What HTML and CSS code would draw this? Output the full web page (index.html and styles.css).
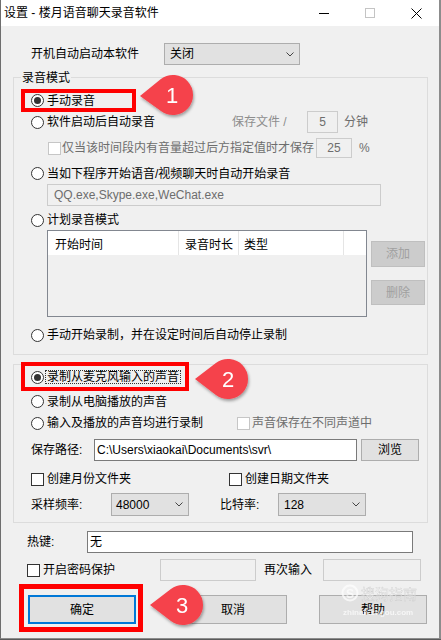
FILE: index.html
```html
<!DOCTYPE html>
<html lang="zh-CN">
<head>
    <meta charset="UTF-8">
    <title>设置 - 楼月语音聊天录音软件</title>
    <link rel="stylesheet" href="styles.css">
</head>
<body>
    <div class="window">
        <div class="titlebar">
            <span class="title">设置 - 楼月语音聊天录音软件</span>
            <span class="tb-btn">
                <svg width="10" height="10" viewBox="0 0 10 10"><path d="M0 5.5H10" stroke="#000" stroke-width="1"/></svg>
            </span>
            <span class="tb-btn">
                <svg width="10" height="10" viewBox="0 0 10 10"><rect x="0.5" y="0.5" width="9" height="9" fill="none" stroke="#c4c4c4"/></svg>
            </span>
            <span class="tb-btn">
                <svg width="11" height="11" viewBox="0 0 11 11"><path d="M0.5 0.5L10.5 10.5M10.5 0.5L0.5 10.5" stroke="#000" stroke-width="1"/></svg>
            </span>
        </div>

        <div class="content">
            <div class="row row-autostart">
                <span class="autostart-label">开机自动启动本软件</span>
                <div class="select sel-auto">
                    <span>关闭</span>
                    <svg class="chev" width="8" height="5" viewBox="0 0 8 5"><path d="M0.5 0.5L4 4L7.5 0.5" fill="none" stroke="#444"/></svg>
                </div>
            </div>

            <!-- 录音模式 -->
            <div class="group group-mode">
                <div class="legend">录音模式</div>

                <div class="row r-manual">
                    <span class="radio on"><i></i>手动录音</span>
                </div>
                <div class="row r-startup">
                    <span class="radio"><i></i>软件启动后自动录音</span>
                    <span class="save-lbl">保存文件 /</span>
                    <span class="field disabled f-min">5</span>
                    <span class="unit">分钟</span>
                </div>
                <div class="row r-level">
                    <span class="check disabled"><i></i>仅当该时间段内有音量超过后方指定值时才保存</span>
                    <span class="field disabled f-pct">25</span>
                    <span class="pct">%</span>
                </div>
                <div class="row r-program">
                    <span class="radio"><i></i>当如下程序开始语音/视频聊天时自动开始录音</span>
                </div>
                <div class="row r-apps">
                    <span class="field disabled f-apps">QQ.exe,Skype.exe,WeChat.exe</span>
                </div>
                <div class="row r-plan">
                    <span class="radio"><i></i>计划录音模式</span>
                </div>
                <div class="row r-list">
                    <div class="listview">
                        <div class="list-head">
                            <span class="col c1">开始时间</span>
                            <span class="col c2">录音时长</span>
                            <span class="col c3">类型</span>
                            <span class="col c4"></span>
                        </div>
                    </div>
                    <div class="list-btns">
                        <span class="btn disabled b-add">添加</span>
                        <span class="btn disabled b-del">删除</span>
                    </div>
                </div>
                <div class="row r-timed">
                    <span class="radio"><i></i>手动开始录制，并在设定时间后自动停止录制</span>
                </div>
            </div>

            <!-- 声音来源 -->
            <div class="group group-source">
                <div class="row r-mic">
                    <span class="radio on"><i></i><span class="focus">录制从麦克风输入的声音</span></span>
                </div>
                <div class="row r-pc">
                    <span class="radio"><i></i>录制从电脑播放的声音</span>
                </div>
                <div class="row r-both">
                    <span class="radio"><i></i>输入及播放的声音均进行录制</span>
                    <span class="check disabled ch-channel"><i></i>声音保存在不同声道中</span>
                </div>
                <div class="row r-path">
                    <span class="path-lbl">保存路径:</span>
                    <span class="field f-path">C:\Users\xiaokai\Documents\svr\</span>
                    <span class="btn b-browse">浏览</span>
                </div>
                <div class="row r-folders">
                    <span class="check ch-month"><i></i>创建月份文件夹</span>
                    <span class="check"><i></i>创建日期文件夹</span>
                </div>
                <div class="row r-rates">
                    <span class="rate-lbl">采样频率:</span>
                    <div class="select sel-rate">
                        <span>48000</span>
                        <svg class="chev" width="8" height="5" viewBox="0 0 8 5"><path d="M0.5 0.5L4 4L7.5 0.5" fill="none" stroke="#444"/></svg>
                    </div>
                    <span class="bit-lbl">比特率:</span>
                    <div class="select sel-bit">
                        <span>128</span>
                        <svg class="chev" width="8" height="5" viewBox="0 0 8 5"><path d="M0.5 0.5L4 4L7.5 0.5" fill="none" stroke="#444"/></svg>
                    </div>
                </div>
            </div>

            <div class="row r-hotkey">
                <span class="hotkey-lbl">热键:</span>
                <span class="field f-hotkey">无</span>
            </div>
            <div class="row r-password">
                <span class="check ch-pass"><i></i>开启密码保护</span>
                <span class="field disabled f-pass"></span>
                <span class="again-lbl">再次输入</span>
                <span class="field disabled f-pass2"></span>
            </div>
            <div class="row r-buttons">
                <span class="btn default b-ok">确定</span>
                <span class="btn b-cancel">取消</span>
                <span class="btn b-help">帮助</span>
            </div>
        </div>

        <!-- 标注层 -->
        <svg class="overlay" width="441" height="640" viewBox="0 0 441 640">
            <defs>
                <filter id="shadow" x="-30%" y="-30%" width="160%" height="160%">
                    <feDropShadow dx="1" dy="2" stdDeviation="1.5" flood-color="#000" flood-opacity="0.35"/>
                </filter>
            </defs>

            <rect x="23" y="91" width="111" height="19" fill="none" stroke="#ff0000" stroke-width="4"/>
            <rect x="23" y="364" width="164" height="25" fill="none" stroke="#ff0000" stroke-width="4"/>
            <rect x="21.5" y="586.5" width="119" height="43" fill="none" stroke="#ff0000" stroke-width="5"/>

            <g transform="translate(173 95)" filter="url(#shadow)">
                <path d="M-33 1L-12.1-15.9A20 20 0 1 1-12.1 15.9Z" fill="#f5434c"/>
                <text x="-1" y="8" class="num">1</text>
            </g>
            <g transform="translate(228 379)" filter="url(#shadow)">
                <path d="M-33 0L-12.1-15.9A20 20 0 1 1-12.1 15.9Z" fill="#f5434c"/>
                <text x="0" y="8" class="num">2</text>
            </g>
            <g transform="translate(183 605)" filter="url(#shadow)">
                <path d="M-33 0L-12.1-15.9A20 20 0 1 1-12.1 15.9Z" fill="#f5434c"/>
                <text x="-1" y="8" class="num">3</text>
            </g>

            <g class="watermark">
                <circle cx="350" cy="593" r="7.5" fill="none" stroke="#fff" stroke-width="2"/>
                <text x="350" y="597.5" class="wm-s">S</text>
                <text x="361" y="599" class="wm-cn">搜狗指南</text>
                <text x="343" y="615" class="wm-en">zhinan.sogou.com</text>
            </g>
        </svg>
    </div>
</body>
</html>
```

FILE: styles.css
```css
* {
    margin: 0;
    padding: 0;
    box-sizing: border-box;
}

body {
    width: 441px;
    height: 640px;
    background: #5a5a5a;
    font-family: "Liberation Sans", "Noto Sans CJK SC", sans-serif;
    font-size: 12px;
    line-height: 14px;
    color: #000;
    overflow: hidden;
}

.window {
    position: relative;
    width: 441px;
    height: 639px;
    background: #f0f0f0;
    border-left: 1px solid #6e6e6e;
    border-right: 2px solid #8c8c8c;
    border-bottom: 1px solid #8c8c8c;
}

/* 标题栏 */
.titlebar {
    display: flex;
    align-items: center;
    height: 26px;
    background: #fff;
}

.title {
    padding-left: 3px;
    flex: 1;
}

.tb-btn {
    display: flex;
    align-items: center;
    justify-content: center;
    width: 46px;
    height: 26px;
}

/* 通用 */
.row {
    display: flex;
    align-items: center;
}

.radio,
.check {
    display: flex;
    align-items: center;
    white-space: nowrap;
}

.radio i,
.check i {
    display: flex;
    align-items: center;
    justify-content: center;
    width: 13px;
    height: 13px;
    border: 1px solid #333;
    background: #fff;
    margin-right: 3px;
    flex-shrink: 0;
}

.radio i {
    border-radius: 50%;
}

.radio.on i::after {
    content: "";
    width: 7px;
    height: 7px;
    border-radius: 50%;
    background: #333;
}

.check.disabled {
    color: #6d6d6d;
}

.check.disabled i {
    border-color: #c6c6c6;
}

.field {
    display: flex;
    align-items: center;
    height: 22px;
    padding-left: 2px;
    background: #fff;
    border: 1px solid #7a7a7a;
    white-space: nowrap;
    overflow: hidden;
}

.field.disabled {
    background: #f0f0f0;
    border-color: #cccccc;
    color: #6d6d6d;
}

.select {
    display: flex;
    align-items: center;
    justify-content: space-between;
    height: 22px;
    padding: 0 5px 0 5px;
    background: #e1e1e1;
    border: 1px solid #adadad;
}

.btn {
    display: flex;
    align-items: center;
    justify-content: center;
    background: #e1e1e1;
    border: 1px solid #adadad;
}

.btn.disabled {
    background: #cccccc;
    border-color: #bfbfbf;
    color: #a0a0a0;
}

.btn.default {
    border: 2px solid #0078d7;
}

/* 开机启动 */
.content {
    display: flex;
    flex-direction: column;
}

.row-autostart {
    margin-top: 17px;
    height: 22px;
    padding-left: 30px;
}

.autostart-label {
    width: 133px;
}

.sel-auto {
    width: 136px;
    padding-left: 5px;
}

/* 分组框 */
.group {
    margin-left: 12px;
    width: 415px;
    border: 1px solid #dcdcdc;
    display: flex;
    flex-direction: column;
}

.group .row {
    padding-left: 17px;
}

.group-mode {
    margin-top: 12px;
    padding-bottom: 9px;
}

.legend {
    align-self: flex-start;
    margin: -7px 0 0 7px;
    padding: 0 1px;
    height: 14px;
    background: #f0f0f0;
}

.r-manual {
    margin-top: 5px;
    height: 21px;
}

.r-startup {
    height: 22px;
    margin-top: 0;
}

.save-lbl {
    margin-left: 77px;
    width: 75px;
    color: #8d8d8d;
}

.f-min {
    width: 31px;
    justify-content: center;
    padding-left: 0;
}

.unit {
    margin-left: 6px;
    color: #6d6d6d;
}

.r-level {
    margin-top: 4px;
    height: 22px;
}

.group .r-level {
    padding-left: 34px;
}

.r-level .check i {
    margin-right: 1px;
}

.f-pct {
    margin-left: 2px;
    width: 36px;
    height: 20px;
    justify-content: center;
    padding-left: 0;
}

.pct {
    margin-left: 7px;
    color: #6d6d6d;
}

.r-program {
    margin-top: 4px;
    height: 21px;
}

.r-apps {
    height: 22px;
}

.group .r-apps {
    padding-left: 33px;
}

.f-apps {
    width: 334px;
    padding-left: 6px;
    color: #8a8a8a;
}

.r-plan {
    margin-top: 4px;
    height: 20px;
}

.r-list {
    align-items: flex-start;
    height: 87px;
}

.group .r-list {
    padding-left: 33px;
}

.listview {
    width: 320px;
    height: 87px;
    border: 1px solid #828790;
    background: #f0f0f0;
}

.list-head {
    display: flex;
    height: 24px;
    background: #fff;
}

.col {
    display: flex;
    align-items: center;
    padding-top: 3px;
    border-right: 1px solid #e5e5e5;
}

.c1 {
    width: 131px;
    padding-left: 7px;
}

.c2 {
    width: 60px;
    padding-left: 6px;
}

.c3 {
    width: 105px;
    padding-left: 5px;
}

.c4 {
    flex: 1;
    border-right: none;
}

.list-btns {
    display: flex;
    flex-direction: column;
    margin-left: 4px;
    padding-top: 11px;
}

.b-add {
    width: 54px;
    height: 26px;
}

.b-del {
    width: 54px;
    height: 25px;
    margin-top: 13px;
}

.r-timed {
    margin-top: 8px;
    height: 20px;
}

/* 声音来源 */
.group-source {
    margin-top: 9px;
    padding-top: 1px;
    padding-bottom: 6px;
}

.r-mic {
    height: 22px;
}

.r-mic .radio i {
    margin-right: 1px;
}

.focus {
    border: 1px dotted #333;
    padding: 0 1px;
    line-height: 12px;
}

.r-pc {
    margin-top: 2px;
    height: 23px;
}

.r-both {
    height: 20px;
}

.ch-channel {
    margin-left: 34px;
}

.ch-channel i {
    margin-right: 2px;
}

.r-path {
    margin-top: 6px;
    height: 22px;
}

.path-lbl {
    width: 63px;
}

.f-path {
    width: 263px;
}

.b-browse {
    margin-left: 4px;
    width: 58px;
    height: 22px;
}

.r-folders {
    margin-top: 7px;
    height: 22px;
}

.ch-month {
    width: 198px;
}

.r-rates {
    margin-top: 3px;
    height: 23px;
}

.rate-lbl {
    width: 80px;
}

.sel-rate {
    width: 78px;
    height: 23px;
    padding-left: 4px;
}

.bit-lbl {
    margin-left: 31px;
    width: 58px;
}

.sel-bit {
    width: 88px;
    height: 23px;
    padding-left: 5px;
}

/* 底部 */
.r-hotkey {
    margin-top: 8px;
    height: 22px;
    padding-left: 26px;
}

.hotkey-lbl {
    width: 60px;
}

.f-hotkey {
    width: 326px;
}

.r-password {
    margin-top: 6px;
    height: 22px;
    padding-left: 26px;
}

.ch-pass {
    width: 133px;
}

.f-pass {
    width: 96px;
}

.again-lbl {
    margin-left: 8px;
    width: 59px;
}

.f-pass2 {
    width: 98px;
}

.r-buttons {
    margin-top: 14px;
    height: 29px;
    padding-left: 27px;
}

.r-buttons .btn {
    width: 108px;
    height: 29px;
}

.b-cancel {
    margin-left: 43px;
}

.b-help {
    margin-left: 32px;
}

/* 标注层 */
.overlay {
    position: absolute;
    top: 0;
    left: -1px;
    pointer-events: none;
}

.num {
    font-family: "Liberation Sans", sans-serif;
    font-size: 22px;
    fill: #fff;
    text-anchor: middle;
}

.watermark {
    opacity: 0.7;
}

.wm-s {
    font-family: "Liberation Sans", sans-serif;
    font-size: 12px;
    font-weight: bold;
    fill: #fff;
    text-anchor: middle;
}

.wm-cn {
    font-family: "Noto Sans CJK SC", sans-serif;
    font-size: 14px;
    fill: #fff;
    stroke: #bdbdbd;
    stroke-width: 0.4;
}

.wm-en {
    font-family: "Liberation Sans", sans-serif;
    font-size: 8px;
    font-weight: bold;
    fill: #fff;
}
```
